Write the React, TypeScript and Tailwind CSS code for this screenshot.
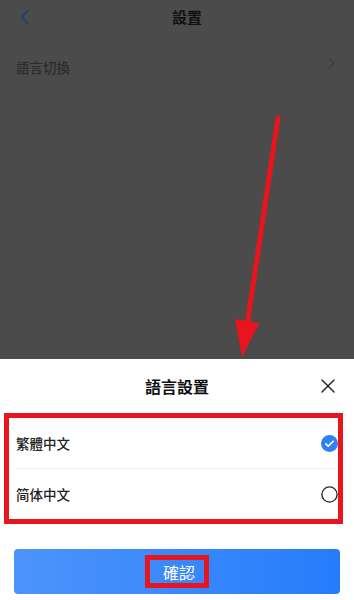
const OPTIONS = [
	{ label: "繁體中文", selected: true },
	{ label: "简体中文", selected: false },
] as const;

const FONT = "font-['Noto_Sans_CJK_TC','Noto_Sans',sans-serif]";

function Check({ on }: { on: boolean }) {
	if (on) {
		return (
			<svg width="17" height="17" viewBox="0 0 17 17">
				<circle cx="8.5" cy="8.5" r="8.5" fill="#2f7ff5" />
				<path d="M4.8 8.8l2.4 2.3 5-4.9" fill="none" stroke="#fff" strokeWidth="1.6" strokeLinecap="round" strokeLinejoin="round" />
			</svg>
		);
	}
	return (
		<svg width="17" height="17" viewBox="0 0 17 17">
			<circle cx="8.5" cy="8.5" r="7.6" fill="none" stroke="#2b2b2b" strokeWidth="1.4" />
		</svg>
	);
}

export default function App() {
	return (
		<div className={`relative flex h-[600px] w-full flex-col overflow-hidden bg-[#4b4b4b] ${FONT}`}>
			{/* dimmed page */}
			<div className="flex h-[34px] items-center">
				<div className="flex w-[40px] pl-[20px]">
					<svg width="10" height="16" viewBox="0 0 10 16">
						<path d="M8 1.5L2 8l6 6.5" fill="none" stroke="#1d406d" strokeWidth="1.8" strokeLinecap="round" strokeLinejoin="round" />
					</svg>
				</div>
				<h1 className="flex-1 text-center text-[15px] font-bold text-[#111]">設置</h1>
				<div className="w-[20px]" />
			</div>
			<div className="mt-[10px] flex h-[46px] items-center justify-between pl-[16px] pr-[19px]">
				<span className="text-[13.5px] font-medium text-[#2b2b2b]">語言切換</span>
				<svg width="7" height="12" viewBox="0 0 7 12" className="mb-[9px]">
					<path d="M1 1l5 5-5 5" fill="none" stroke="#3c3c3c" strokeWidth="1.2" strokeLinecap="round" />
				</svg>
			</div>

			{/* bottom sheet */}
			<div className="mt-auto flex h-[241px] flex-col bg-white">
				<div className="grid h-[54px] grid-cols-[1fr_auto_1fr] items-center">
					<div />
					<h2 className="text-[16px] font-bold text-[#111]">語言設置</h2>
					<div className="flex justify-end pr-[19px]">
						<svg width="14" height="14" viewBox="0 0 14 14">
							<path d="M1 1l12 12M13 1L1 13" stroke="#2a2a2a" strokeWidth="1.5" strokeLinecap="round" />
						</svg>
					</div>
				</div>

				<div className="ml-[4px] mr-[11px] border-[5px] border-[#e8141e]">
					{OPTIONS.map(({ label, selected }, i) => (
						<div key={label}>
							{i > 0 && <div className="ml-[7px] mr-[2px] h-px bg-[#f0f0f0]" />}
							<div className="flex h-[50px] items-center justify-between pl-[7px] pr-0">
								<span className="text-[13.5px] font-medium text-[#222]">{label}</span>
								<Check on={selected} />
							</div>
						</div>
					))}
				</div>

				<button className="mx-[14px] mt-[25px] flex h-[45px] items-center justify-center rounded-[4px] bg-gradient-to-r from-[#4c94fb] to-[#257cfb]">
					<span className="flex h-[33px] items-center border-[5px] border-[#e8141e] pl-[13px] pr-[9px] text-[16px] text-white">
						確認
					</span>
				</button>
			</div>

			{/* annotation arrow */}
			<svg className="pointer-events-none absolute left-0 top-0" width="354" height="600" viewBox="0 0 354 600">
				<line x1="278" y1="118" x2="247.5" y2="322" stroke="#e8141e" strokeWidth="5" strokeLinecap="round" />
				<polygon points="235,319 259.5,323 242,357" fill="#e8141e" />
			</svg>
		</div>
	);
}
